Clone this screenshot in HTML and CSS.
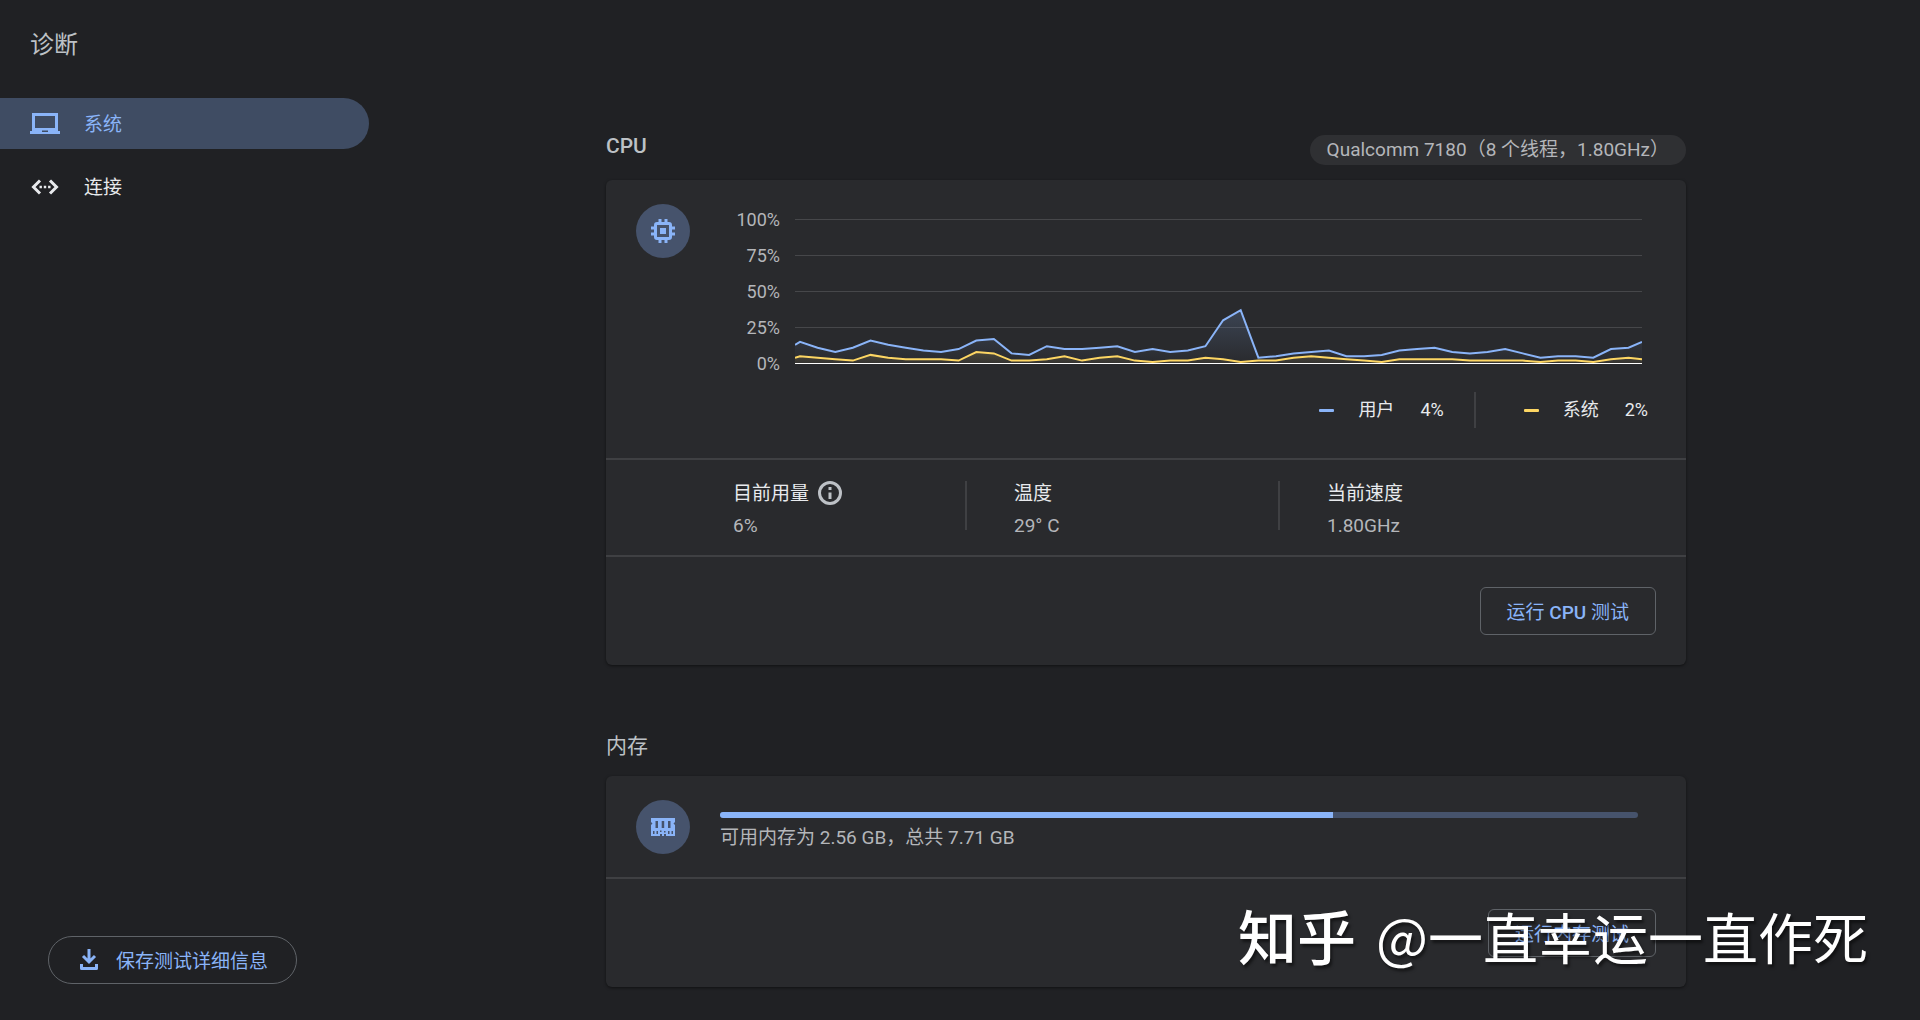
FILE: index.html
```html
<!DOCTYPE html>
<html lang="zh-CN">
<head>
    <meta charset="UTF-8">
    <title>诊断</title>
    <link rel="stylesheet" href="styles.css">
</head>
<body>
    <div class="app">
        <aside class="sidebar">
            <h1 class="app-title">诊断</h1>
            <nav class="nav">
                <a class="nav-item selected" href="#system">
                    <svg class="nav-icon" viewBox="0 0 30 24">
                        <path fill-rule="evenodd" d="M2 1h26v18h2v3H0v-3h2zM5 4v12h20V4zM12 18.500h6v1.500h-6z" fill="currentColor"/>
                    </svg>
                    <span>系统</span>
                </a>
                <a class="nav-item" href="#connectivity">
                    <svg class="nav-icon" viewBox="0 0 30 24" fill="none" stroke="currentColor" stroke-width="3">
                        <path d="M10 5.500 3.500 12l6.500 6.500M20 5.500l6.500 6.500-6.500 6.500"/>
                        <path d="M9.500 12h2.400M13.800 12h2.400M18.100 12h2.400" stroke-width="2.400"/>
                    </svg>
                    <span>连接</span>
                </a>
            </nav>
            <button class="save-button" type="button">
                <svg class="save-icon" viewBox="0 0 20 24" fill="none" stroke="currentColor" stroke-width="3">
                    <path d="M10 1v12M4 8l6 6 6-6"/>
                    <path d="M2.500 16v4.500h15V16" stroke-linejoin="round"/>
                </svg>
                <span>保存测试详细信息</span>
            </button>
        </aside>

        <main class="content">
            <section class="section" id="system">
                <header class="section-header">
                    <h2 class="latin">CPU</h2>
                    <span class="chip">Qualcomm 7180（8 个线程，1.80GHz）</span>
                </header>
                <div class="card">
                    <div class="card-body chart-body">
                        <div class="badge">
                            <svg viewBox="0 0 24 24" fill="none" stroke="currentColor">
                                <rect x="4.500" y="4.500" width="15" height="15" rx="1.500" stroke-width="3"/>
                                <path d="M9 0v4M15 0v4M9 20v4M15 20v4M0 9h4M0 15h4M20 9h4M20 15h4" stroke-width="3"/>
                                <rect x="9" y="9" width="6" height="6" fill="currentColor" stroke="none"/>
                            </svg>
                        </div>
                        <div class="chart-area">
                            <div class="chart">
                                <div class="chart-labels">
                                    <span>100%</span>
                                    <span>75%</span>
                                    <span>50%</span>
                                    <span>25%</span>
                                    <span>0%</span>
                                </div>
                                <svg id="cpu-chart" class="chart-plot" viewBox="0 0 848 174" preserveAspectRatio="none">
                                    <defs>
                                        <linearGradient id="user-fill" gradientUnits="userSpaceOnUse" x1="0" y1="90" x2="0" y2="160">
                                            <stop offset="0" stop-color="#8ab4f8" stop-opacity="0.250"/>
                                            <stop offset="1" stop-color="#8ab4f8" stop-opacity="0"/>
                                        </linearGradient>
                                        <linearGradient id="system-fill" gradientUnits="userSpaceOnUse" x1="0" y1="140" x2="0" y2="160">
                                            <stop offset="0" stop-color="#fdd663" stop-opacity="0.200"/>
                                            <stop offset="1" stop-color="#fdd663" stop-opacity="0.050"/>
                                        </linearGradient>
                                    </defs>
                                </svg>
                            </div>
                            <div class="legend">
                                <div class="legend-item user">
                                    <i class="swatch"></i>
                                    <span>用户</span>
                                    <span class="legend-value">4%</span>
                                </div>
                                <div class="legend-item system">
                                    <i class="swatch"></i>
                                    <span>系统</span>
                                    <span class="legend-value">2%</span>
                                </div>
                            </div>
                        </div>
                    </div>
                    <div class="stats">
                        <div class="stat">
                            <div>
                                <div class="stat-name">
                                    目前用量
                                    <svg class="info-icon" viewBox="0 0 24 24">
                                        <circle cx="12" cy="12" r="10.500" fill="none" stroke="currentColor" stroke-width="3"/>
                                        <path d="M10.500 6h3v3h-3zM10.500 11.500h3V18h-3z" fill="currentColor"/>
                                    </svg>
                                </div>
                                <div class="stat-value">6%</div>
                            </div>
                        </div>
                        <div class="stat">
                            <div>
                                <div class="stat-name">温度</div>
                                <div class="stat-value">29° C</div>
                            </div>
                        </div>
                        <div class="stat">
                            <div>
                                <div class="stat-name">当前速度</div>
                                <div class="stat-value">1.80GHz</div>
                            </div>
                        </div>
                    </div>
                    <div class="card-actions">
                        <button class="run-button" type="button">运行 <span class="latin">CPU</span> 测试</button>
                    </div>
                </div>
            </section>

            <section class="section">
                <header class="section-header">
                    <h2>内存</h2>
                </header>
                <div class="card">
                    <div class="card-body memory-body">
                        <div class="badge">
                            <svg viewBox="0 0 24 24" fill="currentColor">
                                <path fill-rule="evenodd" d="M0 3h24v4l-1.500 1.500L24 10v11h-9v-2h-2v2h-2v-2H9v2H0V10l1.500-1.500L0 7zM4.500 6v7H7V6zM10.700 6v7h2.500V6zM17 6v7h2.500V6zM2 16v3h1.500v-3zM5.500 16v3H7v-3zM9 15.500V17h1.500v-1.500zM13 16v1.500h1.500V16zM17 16v3h1.500v-3zM20.500 16v3H22v-3z"/>
                            </svg>
                        </div>
                        <div class="memory-usage">
                            <progress class="memory-bar" id="memory-bar" value="5.15" max="7.71"></progress>
                            <label for="memory-bar">可用内存为 2.56 GB，总共 7.71 GB</label>
                        </div>
                    </div>
                    <div class="card-actions">
                        <button class="run-button" type="button">运行内存测试</button>
                    </div>
                </div>
            </section>
        </main>
    </div>

    <div class="watermark">
        <span class="watermark-brand">知乎</span>
        <span>@一直幸运一直作死</span>
    </div>

    <script src="script.js"></script>
</body>
</html>
```

FILE: styles.css
```css
* {
    box-sizing: border-box;
}

body {
    margin: 0;
    background-color: #202124;
    color: #e8eaed;
    font-family: Roboto, "Noto Sans CJK SC", sans-serif;
    font-size: 19px;
    line-height: 26px;
}

h1,
h2 {
    margin: 0;
    color: #bdc1c6;
    font-weight: 400;
}

button {
    background: none;
    border: 1px solid #5f6368;
    color: #8ab4f8;
    font: inherit;
    cursor: pointer;
}

/* Latin labels are medium, Chinese stays regular */
.latin {
    font-weight: 500;
}

.app {
    display: flex;
    min-height: 100vh;
}

.sidebar {
    display: flex;
    flex-direction: column;
    width: 372px;
    padding-bottom: 36px;
}

.app-title {
    padding: 29px 30px 37px;
    font-size: 24px;
    line-height: 32px;
}

.nav {
    display: flex;
    flex-direction: column;
    gap: 12px;
    margin-right: 3px;
}

.nav-item {
    display: flex;
    align-items: center;
    gap: 24px;
    height: 51px;
    padding-left: 30px;
    border-radius: 0 26px 26px 0;
    color: #e8eaed;
    text-decoration: none;
}

.nav-item span,
.save-button span {
    padding-top: 3px;
}

.nav-item.selected {
    background-color: #3f4c63;
    color: #8ab4f8;
}

.nav-icon {
    width: 30px;
    height: 24px;
}

.save-button {
    display: flex;
    align-items: center;
    align-self: flex-start;
    gap: 17px;
    height: 48px;
    margin-top: auto;
    margin-left: 48px;
    padding: 0 28px 0 30px;
    border-radius: 24px;
}

.save-icon {
    width: 20px;
    height: 24px;
}

.content {
    flex: 1;
    padding: 131px 30px 33px;
}

.section {
    max-width: 1080px;
    margin: 0 auto 66px;
}

.section:last-child {
    margin-bottom: 0;
}

.section-header {
    display: flex;
    justify-content: space-between;
    margin-bottom: 15px;
}

.section-header h2 {
    font-size: 21px;
    line-height: 30px;
}

.chip {
    margin-top: 4px;
    padding: 0 17px;
    border-radius: 15px;
    background-color: #2f3033;
    color: #b4b6ba;
    line-height: 30px;
}

.card {
    border-radius: 6px;
    background-color: #292a2d;
    box-shadow: 0 1px 3px rgba(0, 0, 0, 0.5);
}

.card-body {
    display: flex;
    gap: 30px;
    padding: 24px 38px 23px 30px;
    border-bottom: 2px solid #3f4043;
}

.chart-body {
    padding-bottom: 30px;
}

.memory-body {
    padding-right: 48px;
}

.badge {
    display: flex;
    flex-shrink: 0;
    align-items: center;
    justify-content: center;
    width: 54px;
    height: 54px;
    border-radius: 50%;
    background-color: #46536c;
    color: #8ab4f8;
}

.badge svg {
    width: 24px;
    height: 24px;
}

.chart-area {
    flex: 1;
    min-width: 0;
}

.chart {
    display: flex;
    gap: 15px;
    padding-right: 6px;
}

.chart-labels {
    display: flex;
    flex-direction: column;
    flex-shrink: 0;
    gap: 4px;
    width: 60px;
    height: 174px;
    color: #b4b6ba;
    font-size: 18px;
    line-height: 32px;
    text-align: right;
}

.chart-plot {
    flex: 1;
    min-width: 0;
    height: 174px;
}

.chart-plot path,
.chart-plot line {
    vector-effect: non-scaling-stroke;
}

.grid-line {
    stroke: #46474a;
}

.grid-line.base {
    stroke: #ffffff;
}

.line {
    fill: none;
    stroke-width: 2;
}

.line.user {
    stroke: #8ab4f8;
}

.line.system {
    stroke: #fdd663;
}

.legend {
    display: flex;
    justify-content: flex-end;
    height: 36px;
    margin-top: 14px;
    font-size: 18px;
}

.legend-item {
    display: flex;
    align-items: center;
    gap: 24px;
}

.legend-item.user {
    padding-right: 30px;
    border-right: 2px solid #3f4043;
}

.legend-item.system {
    padding-left: 48px;
}

.legend-value {
    margin-left: 2px;
}

.swatch {
    width: 15px;
    height: 3px;
    border-radius: 1px;
}

.user .swatch {
    background-color: #8ab4f8;
}

.system .swatch {
    background-color: #fdd663;
}

.stats {
    display: grid;
    grid-template-columns: repeat(3, 1fr);
    padding: 21px 95px 16px 46px;
    border-bottom: 2px solid #3f4043;
}

.stat {
    display: flex;
}

.stat:first-child {
    padding-left: 81px;
}

.stat + .stat::before {
    content: "";
    width: 2px;
    height: 49px;
    margin-right: 47px;
    background-color: #3f4043;
}

.stat-name {
    display: flex;
    gap: 9px;
    margin-bottom: 6px;
}

.info-icon {
    width: 24px;
    height: 24px;
    color: #bdc1c6;
}

.stat-value {
    color: #b4b6ba;
}

.card-actions {
    display: flex;
    justify-content: flex-end;
    padding: 30px;
}

.run-button {
    height: 48px;
    padding: 3px 26px 0;
    border-radius: 6px;
}

.memory-usage {
    display: flex;
    flex: 1;
    flex-direction: column;
    gap: 7px;
    padding-top: 12px;
    color: #b4b6ba;
}

.memory-bar {
    display: block;
    width: 100%;
    height: 6px;
    border: none;
    border-radius: 3px;
    overflow: hidden;
    background-color: #46536c;
    -webkit-appearance: none;
    appearance: none;
}

.memory-bar::-webkit-progress-bar {
    background-color: #46536c;
}

.memory-bar::-webkit-progress-value {
    background-color: #8ab4f8;
}

.watermark {
    position: fixed;
    right: 52px;
    bottom: 45px;
    display: flex;
    align-items: center;
    gap: 20px;
    color: #ffffff;
    font-family: "Noto Sans CJK SC", sans-serif;
    font-size: 55px;
    line-height: 80px;
    text-shadow: 2px 3px 3px rgba(0, 0, 0, 0.5);
    pointer-events: none;
}

.watermark-brand {
    font-size: 59px;
    font-weight: 500;
}
```

FILE: script.js
```js
const chart = document.getElementById('cpu-chart');

const user = [13, 15, 11, 8, 11, 16, 13, 11, 9, 8, 10, 16, 17, 7, 6, 12, 10, 10, 11, 12, 8, 10, 8, 9, 12, 30, 37,
    4, 5, 7, 8, 9, 5, 5, 6, 9, 10, 11, 8, 7, 8, 10, 7, 4, 5, 5, 4, 10, 11, 15];
const system = [4, 5, 4, 3, 2, 6, 4, 3, 3, 3, 2, 8, 7, 2, 2, 3, 5, 2, 4, 5, 2, 1, 2, 2, 4, 3, 1,
    2, 2, 4, 5, 4, 3, 2, 1, 3, 3, 3, 3, 2, 2, 2, 2, 1, 2, 2, 1, 3, 4, 3];

const width = 848;
const base = 159.5;
const step = 17.65;

function add(name, attrs) {
    const el = document.createElementNS('http://www.w3.org/2000/svg', name);
    for (const key in attrs) {
        el.setAttribute(key, attrs[key]);
    }
    chart.appendChild(el);
}

function drawGridLine(percent, className) {
    const y = base - percent * 1.44;
    add('line', { x1: 0, x2: width, y1: y, y2: y, class: className });
}

// first and last samples are cut off by the edges of the plot
function toPath(values) {
    const points = values.map((value, i) => {
        const x = Math.max(0, Math.min(width, 5 + (i - 1) * step));
        return x.toFixed(1) + ' ' + (base - value * 1.44).toFixed(1);
    });
    return 'M' + points.join('L');
}

function drawSeries(values, name) {
    const path = toPath(values);
    add('path', { d: path + `V${base}H0Z`, fill: `url(#${name}-fill)` });
    add('path', { d: path, class: 'line ' + name });
}

[25, 50, 75, 100].forEach(percent => drawGridLine(percent, 'grid-line'));
drawSeries(user, 'user');
drawSeries(system, 'system');
drawGridLine(0, 'grid-line base');
```
